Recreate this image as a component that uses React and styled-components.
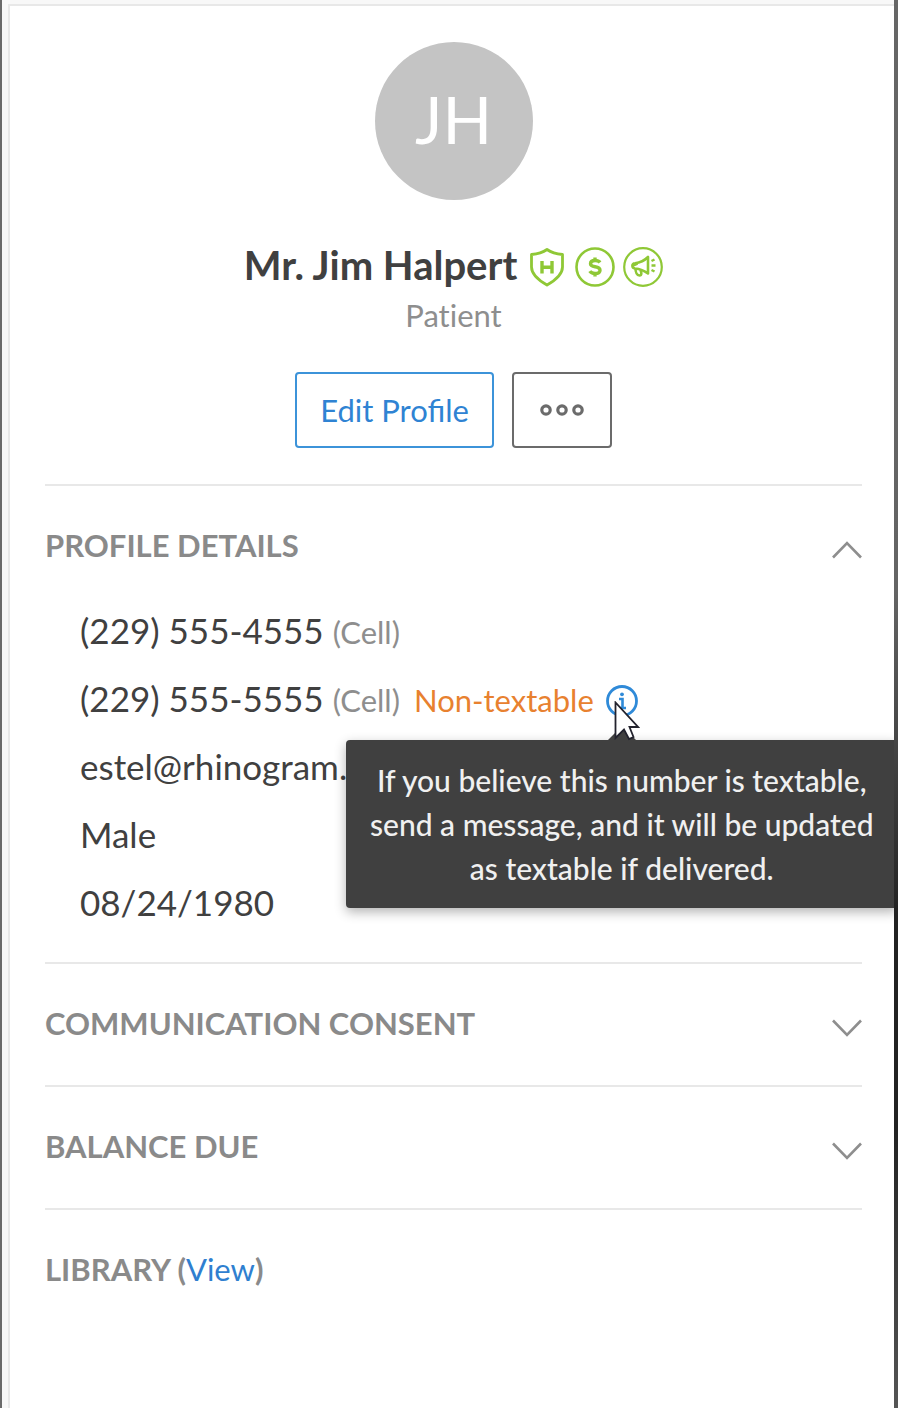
import React, { useState } from "react";
import styled, { createGlobalStyle } from "styled-components";

const GlobalStyle = createGlobalStyle`
  *, *::before, *::after { box-sizing: border-box; }
  body {
    margin: 0;
    background: #f8f8f8;
    color: #404040;
    font-family: Lato, "Liberation Sans", sans-serif;
  }
  h1, h2, p, ul { margin: 0; padding: 0; }
  button { font: inherit; cursor: pointer; }
`;

const Frame = styled.div`
  display: flex;
  min-height: 100vh;
  padding: 4px 0 0 6px;
  overflow: hidden;
  border-left: 2px solid #6a6a6a;
`;

const Panel = styled.main`
  flex: 1;
  min-width: 0;
  padding: 36px 32px 36px 35px;
  background: #fff;
  border-top: 2px solid #e8e8e8;
  border-left: 2px solid #e8e8e8;
`;

const Edge = styled.div`
  position: relative;
  z-index: 3;
  flex: none;
  width: 4px;
  margin-top: -4px;
  background: linear-gradient(#666 0%, #646464 42%, #222 65%, #222 80%, #555 100%);
`;

const Header = styled.header`
  display: flex;
  flex-direction: column;
  align-items: center;
  padding-bottom: 36px;
`;

const Avatar = styled.div`
  display: flex;
  align-items: center;
  justify-content: center;
  width: 158px;
  height: 158px;
  padding-bottom: 4px;
  border-radius: 50%;
  background: #c4c4c4;
  color: #fff;
  font-size: 65px;
  line-height: 80px;
`;

const NameRow = styled.div`
  display: flex;
  align-items: center;
  gap: 10px;
  margin-top: 39px;
`;

const Name = styled.h1`
  font-size: 40px;
  font-weight: 700;
  line-height: 52px;
`;

const Badges = styled.div`
  display: flex;
  gap: 8px;
  padding-top: 4px;
  svg { display: block; }
`;

const Role = styled.p`
  color: #8e8e8e;
  font-size: 31px;
  font-variant-ligatures: none;
  line-height: 48px;
`;

const Actions = styled.div`
  display: flex;
  gap: 18px;
  margin-top: 33px;
`;

const ActionButton = styled.button`
  display: flex;
  align-items: center;
  justify-content: center;
  height: 76px;
  padding: 0 ${(p) => (p.$primary ? 23 : 26)}px;
  border: 2px solid ${(p) => (p.$primary ? "#3c93d9" : "#6b6b6b")};
  border-radius: 4px;
  background: #fff;
  color: ${(p) => (p.$primary ? "#2f83d3" : "#6b6b6b")};
  font-size: 31px;
  line-height: 40px;
`;

const Section = styled.section`
  border-top: 2px solid #e8e8e8;
`;

const SectionHeader = styled.div`
  display: flex;
  align-items: center;
  justify-content: space-between;
  padding: 39px 0 ${(p) => (p.$open ? 31 : 42)}px;
`;

const SectionTitle = styled.h2`
  color: #8a8a8a;
  font-size: 31px;
  font-weight: 700;
  line-height: 40px;
`;

const Toggle = styled.button`
  display: flex;
  padding: 10px 0 0;
  border: 0;
  background: none;
  color: #8e8e8e;
`;

const ViewLink = styled.a`
  color: #2f7fd0;
  font-weight: 400;
  text-decoration: none;
`;

const Details = styled.ul`
  padding: 0 0 26px 35px;
  list-style: none;
`;

const Detail = styled.li`
  display: flex;
  align-items: baseline;
  height: 68px;
  font-size: 35px;
  line-height: 68px;
`;

const Kind = styled.span`
  margin-left: 9px;
  color: #8e8e8e;
  font-size: 31px;
`;

const Warning = styled.span`
  margin-left: 14px;
  color: #e8812f;
  font-size: 31px;
`;

const InfoAnchor = styled.span`
  position: relative;
  display: flex;
  align-self: center;
  margin-left: 12px;
  padding-top: 6px;
`;

const InfoButton = styled.button`
  display: flex;
  padding: 0;
  border: 0;
  background: none;
`;

const Tooltip = styled.div`
  position: absolute;
  z-index: 1;
  top: 61px;
  left: 50%;
  width: 552px;
  padding: 18px 20px;
  transform: translateX(-50%);
  border-radius: 4px;
  background: #404040;
  box-shadow: 0 4px 12px rgba(0, 0, 0, 0.3);
  color: #f0f0f0;
  font-size: 30px;
  font-weight: 500;
  line-height: 44px;
  text-align: center;

  &::before {
    content: "";
    position: absolute;
    bottom: 100%;
    left: 50%;
    margin-left: -14px;
    border: 14px solid transparent;
    border-top-width: 0;
    border-bottom-color: #404040;
  }
`;

const Pointer = styled.svg`
  position: absolute;
  z-index: 2;
  top: 22px;
  left: 8px;
  pointer-events: none;
`;

const ShieldIcon = () => (
  <svg width="40" height="40" viewBox="0 0 40 40" fill="none" stroke="#8fc836" role="img" aria-label="HIPAA">
    <path d="M20 2.5C15 6 10 7 4.500 7.500V20C4.500 28 12 33.500 20 38C28 33.500 35.500 28 35.500 20V7.500C30 7 25 6 20 2.500Z" strokeWidth="2.800" strokeLinejoin="round" />
    <path d="M15 14V26.500M25 14V26.500M15 20.200H25" strokeWidth="3.400" />
  </svg>
);

const DollarIcon = () => (
  <svg width="40" height="40" viewBox="0 0 40 40" fill="none" stroke="#8fc836" role="img" aria-label="Billing">
    <circle cx="20" cy="20" r="18.500" strokeWidth="2.600" />
    <path d="M25 15.500C24 14 22 13.500 20 13.500C17.500 13.500 15.500 14.500 15.500 16.700C15.500 21.500 25 18 25 23.200C25 25.500 23 26.500 20 26.500C17.500 26.500 15.700 25.700 14.800 24.200M20 10.500V14M20 26V29.500" strokeWidth="3.400" />
  </svg>
);

const MegaphoneIcon = () => (
  <svg width="40" height="40" viewBox="0 0 40 40" fill="none" stroke="#8fc836" strokeLinejoin="round" role="img" aria-label="Marketing">
    <circle cx="20" cy="20" r="18.800" strokeWidth="2.200" />
    <path d="M25 10V26.500C21 23.500 17 22 12 21.500C8.500 21 8.500 16.500 12 16.200C18 15.500 21 14 25 10Z" strokeWidth="2.600" />
    <path d="M12.500 21.500C12.500 25 14 28.500 16.500 28.500C19 28.500 18.500 25.500 17.500 23M10 18.500L14.500 16.500" strokeWidth="2.600" />
    <path d="M28.500 14L31.500 12.500M28.500 18.500H32.500M28.500 23L31.500 24.500" strokeWidth="2.400" />
  </svg>
);

const MoreIcon = () => (
  <svg width="44" height="12" viewBox="0 0 44 12" fill="none" stroke="currentColor" strokeWidth="3.200" aria-hidden="true">
    <circle cx="6" cy="6" r="4.200" />
    <circle cx="22" cy="6" r="4.200" />
    <circle cx="38" cy="6" r="4.200" />
  </svg>
);

const Chevron = ({ open }) => (
  <svg width="30" height="18" viewBox="0 0 30 18" fill="none" stroke="currentColor" strokeWidth="2.600" aria-hidden="true">
    <path d={open ? "M1 16.500L15 2L29 16.500" : "M1 1.500L15 16L29 1.500"} />
  </svg>
);

const InfoIcon = () => (
  <svg width="32" height="32" viewBox="0 0 32 32" fill="none" stroke="#2f8ad8" aria-hidden="true">
    <circle cx="16" cy="16" r="14.500" strokeWidth="2.800" />
    <path d="M13 14H16.500V23M12.500 23H20" strokeWidth="2.600" />
    <circle cx="16" cy="9.300" r="1.900" fill="#2f8ad8" stroke="none" />
  </svg>
);

const CursorIcon = () => (
  <Pointer width="26" height="40" viewBox="0 0 26 40" aria-hidden="true">
    <path d="M1.500 1.500V37L10 28.500L15 38L19.500 36L15.500 26H24Z" fill="#fff" stroke="#23232e" strokeWidth="1.800" />
  </Pointer>
);

function CollapsibleSection({ title, defaultOpen = false, children }) {
  const [open, setOpen] = useState(defaultOpen);
  return (
    <Section>
      <SectionHeader $open={open}>
        <SectionTitle>{title}</SectionTitle>
        <Toggle type="button" aria-label={title} aria-expanded={open} onClick={() => setOpen(!open)}>
          <Chevron open={open} />
        </Toggle>
      </SectionHeader>
      {open && children}
    </Section>
  );
}

export default function App() {
  return (
    <>
      <GlobalStyle />
      <Frame>
        <Panel>
          <Header>
            <Avatar>JH</Avatar>
            <NameRow>
              <Name>Mr. Jim Halpert</Name>
              <Badges>
                <ShieldIcon />
                <DollarIcon />
                <MegaphoneIcon />
              </Badges>
            </NameRow>
            <Role>Patient</Role>
            <Actions>
              <ActionButton type="button" $primary>Edit Profile</ActionButton>
              <ActionButton type="button" aria-label="More actions"><MoreIcon /></ActionButton>
            </Actions>
          </Header>
          <CollapsibleSection title="PROFILE DETAILS" defaultOpen>
            <Details>
              <Detail>(229) 555-4555<Kind>(Cell)</Kind></Detail>
              <Detail>
                (229) 555-5555<Kind>(Cell)</Kind>
                <Warning>Non-textable</Warning>
                <InfoAnchor>
                  <InfoButton type="button" aria-label="About non-textable numbers" aria-describedby="textable-tip">
                    <InfoIcon />
                  </InfoButton>
                  <Tooltip id="textable-tip" role="tooltip">
                    If you believe this number is textable, send a message, and it will be updated as textable if delivered.
                  </Tooltip>
                  <CursorIcon />
                </InfoAnchor>
              </Detail>
              <Detail>estel@rhinogram.com</Detail>
              <Detail>Male</Detail>
              <Detail>08/24/1980</Detail>
            </Details>
          </CollapsibleSection>
          <CollapsibleSection title="COMMUNICATION CONSENT" />
          <CollapsibleSection title="BALANCE DUE" />
          <Section>
            <SectionHeader>
              <SectionTitle>LIBRARY (<ViewLink href="#library">View</ViewLink>)</SectionTitle>
            </SectionHeader>
          </Section>
        </Panel>
        <Edge />
      </Frame>
    </>
  );
}
